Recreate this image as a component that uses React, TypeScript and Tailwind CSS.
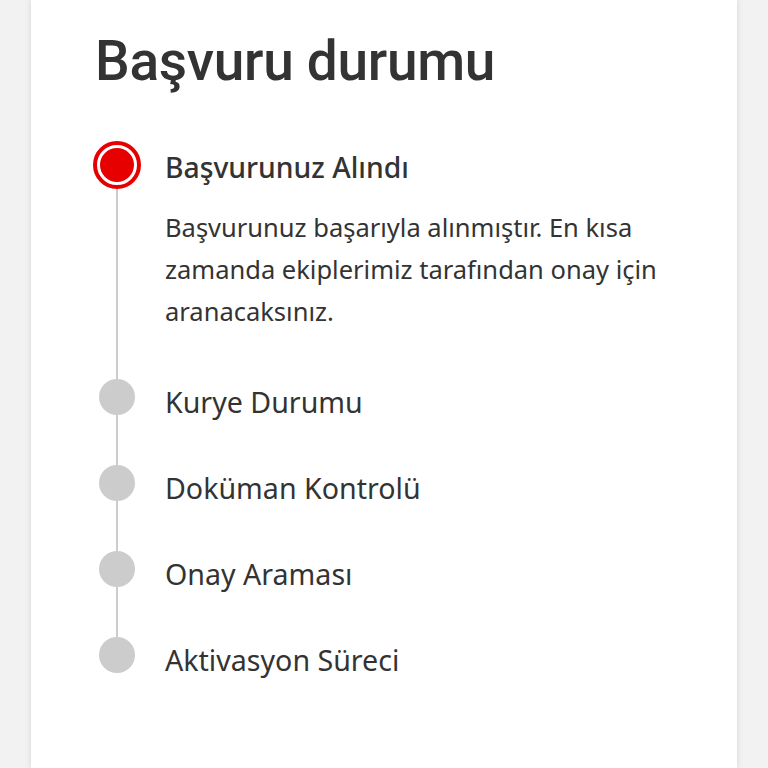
const steps = ['Kurye Durumu', 'Doküman Kontrolü', 'Onay Araması', 'Aktivasyon Süreci'];

export default function App() {
  return (
    <div className="min-h-screen bg-[#f2f2f2] flex justify-center" style={{ fontFamily: '"Noto Sans", sans-serif' }}>
      <div className="w-[706px] min-h-[768px] bg-white shadow-[0_0_6px_rgba(0,0,0,0.12)] pl-[62px] pr-[30px] pt-[34px]">
        <h1
          className="ml-[2px] text-[55px] leading-none font-medium text-[#333333] tracking-[-0.3px]"
          style={{ fontFamily: 'Roboto, "Liberation Sans", sans-serif' }}
        >
          Başvuru durumu
        </h1>

        <div className="mt-[52px] flex flex-col">
          {/* active step */}
          <div className="flex gap-6">
            <div className="w-12 flex flex-col items-center">
              <div className="w-12 h-12 rounded-full border-4 border-[#e60000] flex items-center justify-center">
                <div className="w-[34px] h-[34px] rounded-full bg-[#e60000]" />
              </div>
              <div className="flex-1 w-0.5 bg-[#cccccc]" />
            </div>
            <div className="flex-1 pb-[47px]">
              <div className="h-12 flex items-center pt-[5px] text-[28.3px] font-medium text-[#333333]">Başvurunuz Alındı</div>
              <p className="mt-[17px] w-[515px] text-[25.5px] leading-[42px] text-[#333333]">
                Başvurunuz başarıyla alınmıştır. En kısa zamanda ekiplerimiz tarafından onay için aranacaksınız.
              </p>
            </div>
          </div>

          {steps.map((label, i) => (
            <div key={label} className="flex gap-6">
              <div className="w-12 flex flex-col items-center">
                <div className="w-9 h-9 rounded-full bg-[#cccccc]" />
                {i < steps.length - 1 && <div className="flex-1 w-0.5 bg-[#cccccc]" />}
              </div>
              <div className={`flex-1 ${i < steps.length - 1 ? 'pb-[50px]' : ''}`}>
                <div className="h-9 flex items-center pt-[10px] text-[28.6px] text-[#333333]">{label}</div>
              </div>
            </div>
          ))}
        </div>
      </div>
    </div>
  );
}
